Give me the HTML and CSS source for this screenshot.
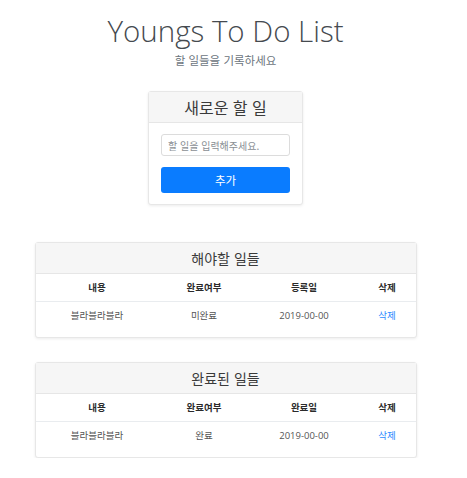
FILE: index.html
```html
<!DOCTYPE html>
<html lang="ko">
<head>
<meta charset="utf-8">
<title>Youngs To Do List</title>
<link rel="stylesheet" href="styles.css">
</head>
<body>
<div class="page">
  <header class="masthead">
    <h1 class="title">Youngs To Do List</h1>
    <p class="subtitle">할 일들을 기록하세요</p>
  </header>

  <section class="card card-new">
    <div class="card-header header-lg">새로운 할 일</div>
    <div class="card-body form">
      <input class="task-input" type="text" placeholder="할 일을 입력해주세요.">
      <button class="btn-add" type="button">추가</button>
    </div>
  </section>

  <section class="card card-list list-todo">
    <div class="card-header">해야할 일들</div>
    <div class="card-body table-body">
      <table class="task-table">
        <colgroup><col class="c1"><col class="c2"><col class="c3"><col class="c4"></colgroup>
        <thead><tr><th>내용</th><th>완료여부</th><th>등록일</th><th>삭제</th></tr></thead>
        <tbody><tr><td>블라블라블라</td><td>미완료</td><td>2019-00-00</td><td><a class="del" href="#">삭제</a></td></tr></tbody>
      </table>
    </div>
  </section>

  <section class="card card-list list-done">
    <div class="card-header">완료된 일들</div>
    <div class="card-body table-body">
      <table class="task-table">
        <colgroup><col class="c1"><col class="c2"><col class="c3"><col class="c4"></colgroup>
        <thead><tr><th>내용</th><th>완료여부</th><th>완료일</th><th>삭제</th></tr></thead>
        <tbody><tr><td>블라블라블라</td><td>완료</td><td>2019-00-00</td><td><a class="del" href="#">삭제</a></td></tr></tbody>
      </table>
    </div>
  </section>
</div>
</body>
</html>
```

FILE: styles.css
```css
* { box-sizing: border-box; }
html, body { margin: 0; padding: 0; background: #fff; }
body {
  font-family: "Open Sans", "Noto Sans CJK KR", sans-serif;
  color: #333;
}
.page {
  width: 451px;
  display: flex;
  flex-direction: column;
  align-items: center;
}
.masthead { text-align: center; margin-top: 12px; }
.title {
  margin: 0;
  font-size: 29.5px;
  font-weight: 300;
  color: #454a4f;
  line-height: 38px;
}
.subtitle {
  margin: 1px 0 0;
  font-family: "Noto Sans CJK KR", sans-serif;
  font-size: 11.5px;
  line-height: 19px;
  color: #6c757d;
}
.card {
  background: #fff;
  border: 1px solid #e7e7e7;
  border-radius: 3px;
  box-shadow: 0 1px 3px rgba(0,0,0,0.08);
}
.card-new { width: 155px; margin-top: 21px; }
.card-header {
  background: #f6f6f6;
  border-bottom: 1px solid #e6e6e6;
  height: 31px;
  display: flex;
  align-items: center;
  justify-content: center;
  font-family: "Noto Sans CJK KR", sans-serif;
  font-size: 14px;
  color: #3a3a3a;
}
.header-lg { font-size: 16px; }
.form {
  padding: 11px 12px 11px;
  display: flex;
  flex-direction: column;
  gap: 11px;
}
.task-input {
  width: 100%;
  height: 22px;
  border: 1px solid #dcdcdc;
  border-radius: 3px;
  padding: 0 6px;
  font-family: "Noto Sans CJK KR", sans-serif;
  font-size: 10px;
  color: #555;
  outline: none;
}
.task-input::placeholder { color: #8a8f94; }
.btn-add {
  width: 100%;
  height: 26px;
  border: 0;
  border-radius: 3px;
  background: #0a7cff;
  color: #fff;
  font-family: "Noto Sans CJK KR", sans-serif;
  font-size: 11.5px;
  padding: 0;
}
.card-list { width: 382px; }
.list-todo { margin-top: 37px; }
.list-done { margin-top: 24px; }
.table-body { padding-bottom: 8px; }
.task-table {
  width: 100%;
  border-collapse: collapse;
  table-layout: fixed;
  font-size: 9.5px;
}
.c1 { width: 123px; }
.c2 { width: 91px; }
.c3 { width: 109px; }
.c4 { width: 57px; }
.task-table th {
  height: 27px;
  font-weight: 700;
  color: #2b2b2b;
  border-bottom: 1px solid #e9ecef;
  text-align: center;
  padding: 0;
}
.task-table td {
  height: 28px;
  color: #555;
  text-align: center;
  padding: 0;
}
.del { color: #2d8cff; text-decoration: none; }
```
